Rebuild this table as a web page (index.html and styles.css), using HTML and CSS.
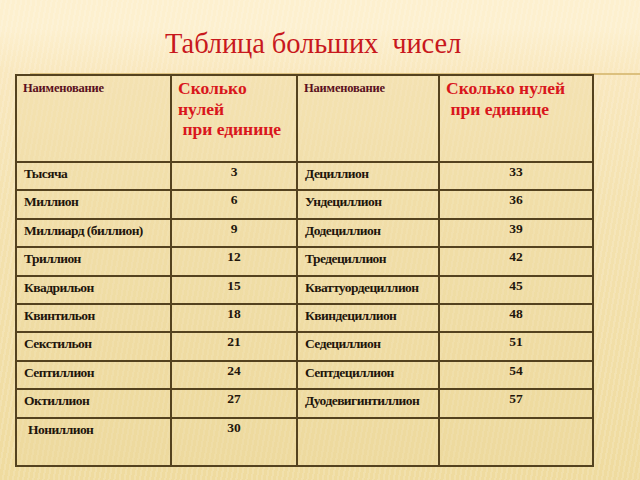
FILE: index.html
```html
<!DOCTYPE html>
<html lang="ru">
<head>
<meta charset="utf-8">
<title>Таблица больших чисел</title>
<link rel="stylesheet" href="styles.css">
</head>
<body>
<div class="slide">
  <h1 class="title">Таблица больших&nbsp; чисел</h1>
  <div class="rule"></div>
  <table class="numbers">
    <colgroup>
      <col class="c-name1">
      <col class="c-zero1">
      <col class="c-name2">
      <col class="c-zero2">
    </colgroup>
    <tr class="head">
      <td class="h-name">Наименование</td>
      <td class="h-zero">Сколько<br>нулей<br>&nbsp;при единице</td>
      <td class="h-name">Наименование</td>
      <td class="h-zero">Сколько нулей<br>&nbsp;при единице</td>
    </tr>
    <tr class="row"><td class="name">Тысяча</td><td class="num">3</td><td class="name">Дециллион</td><td class="num">33</td></tr>
    <tr class="row"><td class="name">Миллион</td><td class="num">6</td><td class="name">Ундециллион</td><td class="num">36</td></tr>
    <tr class="row"><td class="name">Миллиард (биллион)</td><td class="num">9</td><td class="name">Додециллион</td><td class="num">39</td></tr>
    <tr class="row"><td class="name">Триллион</td><td class="num">12</td><td class="name">Тредециллион</td><td class="num">42</td></tr>
    <tr class="row"><td class="name">Квадрильон</td><td class="num">15</td><td class="name">Кваттуордециллион</td><td class="num">45</td></tr>
    <tr class="row"><td class="name">Квинтильон</td><td class="num">18</td><td class="name">Квиндециллион</td><td class="num">48</td></tr>
    <tr class="row"><td class="name">Секстильон</td><td class="num">21</td><td class="name">Седециллион</td><td class="num">51</td></tr>
    <tr class="row"><td class="name">Септиллион</td><td class="num">24</td><td class="name">Септдециллион</td><td class="num">54</td></tr>
    <tr class="row"><td class="name">Октиллион</td><td class="num">27</td><td class="name">Дуодевигинтиллион</td><td class="num">57</td></tr>
    <tr class="last"><td class="name indent">Нониллион</td><td class="num">30</td><td class="name"></td><td class="num"></td></tr>
  </table>
</div>
</body>
</html>
```

FILE: styles.css
```css
html, body {
  margin: 0;
  padding: 0;
}

body {
  width: 640px;
  height: 480px;
  overflow: hidden;
  font-family: "Liberation Serif", "Times New Roman", serif;
}

.slide {
  position: relative;
  width: 640px;
  height: 480px;
  box-sizing: border-box;
  padding-left: 15px;
  background:
    repeating-linear-gradient(100deg, rgba(255, 255, 255, 0.14) 0 2px, rgba(255, 255, 255, 0) 2px 5px),
    linear-gradient(180deg, #fdf0cf 0px, #fdf0cf 28px, #f9e8bf 70px, #f4e2b0 200px, #efdb9f 480px);
  background-size: 100% 100%;
}

.title {
  margin: 0;
  height: 74px;
  box-sizing: border-box;
  padding: 29px 0 0 150px;
  font-weight: normal;
  font-size: 28.5px;
  line-height: 30px;
  letter-spacing: -0.1px;
  color: #c8181d;
  white-space: nowrap;
}

.rule {
  position: absolute;
  left: 30px;
  right: 0;
  top: 73px;
  height: 2px;
  background: #dcc07e;
}

.numbers {
  position: relative;
  border-collapse: collapse;
  table-layout: fixed;
  width: 577px;
  margin-top: 0;
}

.c-name1 { width: 155px; }
.c-zero1 { width: 126px; }
.c-name2 { width: 142px; }
.c-zero2 { width: 154px; }

.numbers td {
  border: 2px solid #54421f;
  vertical-align: top;
  background: rgba(236, 214, 156, 0.35);
  padding: 0;
}

.head {
  height: 87px;
}

.row {
  height: 28.4px;
}

.last {
  height: 48px;
}

.h-name {
  padding: 5px 0 0 6px !important;
  font-size: 12.5px;
  line-height: 14px;
  font-weight: bold;
  letter-spacing: -0.2px;
  color: #5a1020;
}

.h-zero {
  padding: 2px 0 0 6px !important;
  font-size: 17.5px;
  line-height: 20.5px;
  font-weight: bold;
  color: #d9161c;
}

.name {
  padding: 3px 0 0 7px !important;
  font-size: 13.5px;
  line-height: 15px;
  font-weight: bold;
  letter-spacing: -0.55px;
  color: #1f160c;
  white-space: nowrap;
}

.indent {
  padding-left: 11px !important;
}

.num {
  padding: 1px 0 0 0 !important;
  text-align: center;
  font-size: 13.5px;
  line-height: 15px;
  font-weight: bold;
  color: #1f160c;
}
```
